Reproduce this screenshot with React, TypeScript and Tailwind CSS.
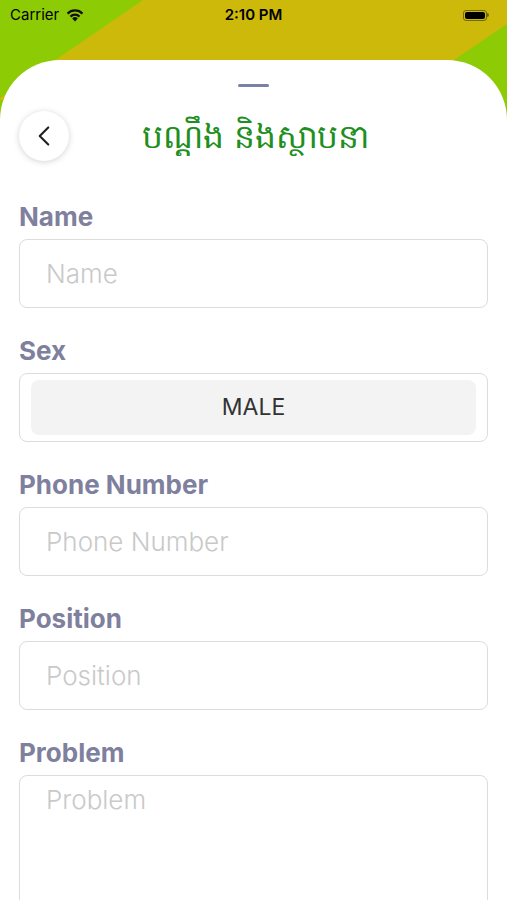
import { ChevronLeft } from 'lucide-react'

const fields = [
  { label: 'Name', placeholder: 'Name' },
  { label: 'Sex', value: 'MALE' },
  { label: 'Phone Number', placeholder: 'Phone Number' },
  { label: 'Position', placeholder: 'Position' },
  { label: 'Problem', placeholder: 'Problem', multiline: true },
]

function StatusBar() {
  return (
    <div className="relative h-[30px] flex items-center justify-between px-[10px] text-[15px] text-black">
      <div className="flex items-center gap-[7px]">
        <span>Carrier</span>
        <svg width="18" height="14" viewBox="0 0 18 14">
          <path d="M9 13.5 L6.2 10.4 A4 4 0 0 1 11.8 10.4 Z" fill="#111" />
          <path d="M3.7 7.8 A7.5 7.5 0 0 1 14.3 7.8 L12.8 9.4 A5.4 5.4 0 0 0 5.2 9.4 Z" fill="#111" />
          <path d="M0.8 4.8 A11.5 11.5 0 0 1 17.2 4.8 L15.7 6.4 A9.3 9.3 0 0 0 2.3 6.4 Z" fill="#111" />
        </svg>
      </div>
      <span className="absolute left-1/2 -translate-x-1/2 font-semibold">2:10 PM</span>
      <div className="flex items-center pr-[8px]">
        <div className="w-[24px] h-[11px] rounded-[3px] border border-[#6d6a10] p-[1px]">
          <div className="w-full h-full rounded-[2px] bg-black" />
        </div>
        <div className="w-[2px] h-[4px] rounded-r-sm bg-[#6d6a10]" />
      </div>
    </div>
  )
}

export default function App() {
  return (
    <div className="relative w-[507px] h-[900px] overflow-hidden bg-[#8dcb04]" style={{ fontFamily: 'Inter, "Noto Sans", sans-serif' }}>
      {/* diagonal band */}
      <svg className="absolute inset-0" width="507" height="120" viewBox="0 0 507 120">
        <polygon points="143,0 507,0 507,24 395,100 0,100 0,98" fill="#ccb90a" />
      </svg>

      <div className="relative">
        <StatusBar />
        <div className="h-[30px]" />

        {/* Sheet */}
        <div className="bg-white rounded-t-[60px] h-[840px] px-[19px]">
          <div className="flex justify-center pt-[24px]">
            <div className="w-[31px] h-[3px] rounded-full bg-[#7c7fa6]" />
          </div>

          <div className="relative flex items-center justify-center h-[52px] mt-[23px]">
            <button className="absolute left-0 w-[50px] h-[50px] rounded-full bg-white shadow-[0_1px_6px_rgba(0,0,0,0.18)] flex items-center justify-center">
              <ChevronLeft className="w-[34px] h-[34px] text-[#222]" strokeWidth={1.5} />
            </button>
            <h1 className="text-[33px] leading-none text-[#1f8f22] ml-[4px]">បណ្ដឹង និងស្ថាបនា</h1>
          </div>

          <div className="flex flex-col gap-[29px] mt-[41px]">
            {fields.map((f) => (
              <div key={f.label} className="flex flex-col gap-[8px]">
                <span className="text-[26px] leading-[28px] font-bold text-[#7e809e]">{f.label}</span>
                {f.value ? (
                  <div className="h-[69px] rounded-[8px] border border-[#dcdcdc] px-[11px] py-[6px]">
                    <div className="h-full rounded-[8px] bg-[#f3f3f3] flex items-center justify-center text-[23px] text-[#333]">
                      {f.value}
                    </div>
                  </div>
                ) : f.multiline ? (
                  <div className="h-[200px] rounded-[8px] border border-[#dcdcdc] px-[26px] pt-[4px] text-[26px] font-light text-[#c9c9c9]">
                    {f.placeholder}
                  </div>
                ) : (
                  <div className="h-[69px] rounded-[8px] border border-[#dcdcdc] px-[26px] flex items-center text-[26px] font-light text-[#c9c9c9]">
                    {f.placeholder}
                  </div>
                )}
              </div>
            ))}
          </div>
        </div>
      </div>
    </div>
  )
}
